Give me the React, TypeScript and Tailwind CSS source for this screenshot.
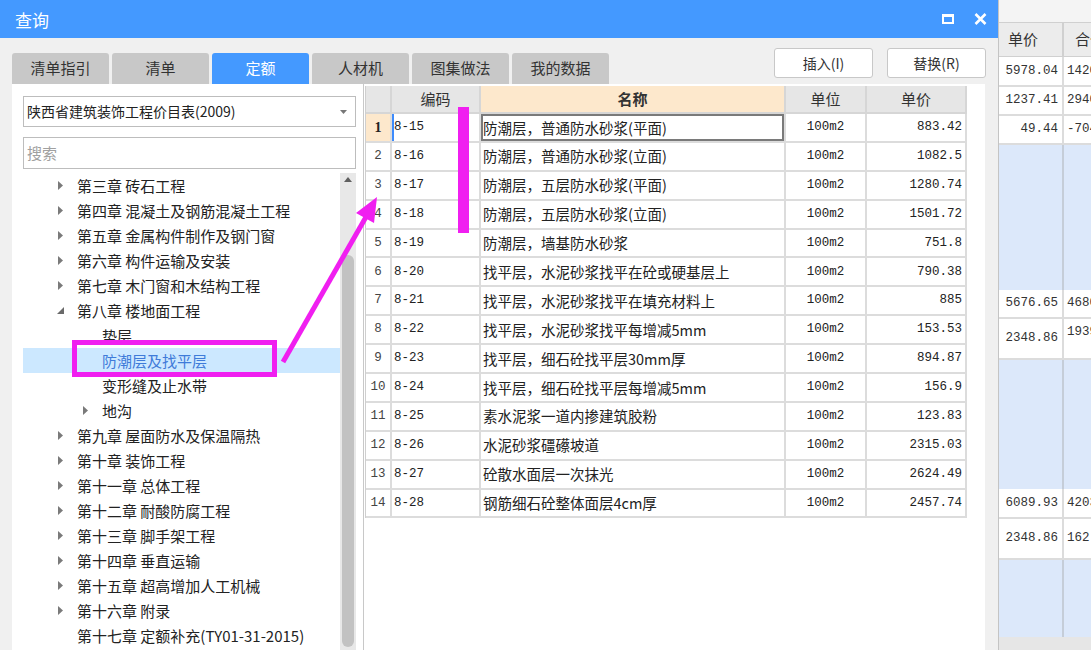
import React from 'react';

const cjk = "font-['Noto_Sans_CJK_SC',sans-serif]";
const mono = "font-['Liberation_Mono',monospace]";

const tabs = ['清单指引', '清单', '定额', '人材机', '图集做法', '我的数据'];

type TreeItem = { t: string; lv: 1 | 2; icon: 'right' | 'open' | 'none'; sel?: boolean };

const tree: TreeItem[] = [
  { t: '第三章 砖石工程', lv: 1, icon: 'right' },
  { t: '第四章 混凝土及钢筋混凝土工程', lv: 1, icon: 'right' },
  { t: '第五章 金属构件制作及钢门窗', lv: 1, icon: 'right' },
  { t: '第六章 构件运输及安装', lv: 1, icon: 'right' },
  { t: '第七章 木门窗和木结构工程', lv: 1, icon: 'right' },
  { t: '第八章 楼地面工程', lv: 1, icon: 'open' },
  { t: '垫层', lv: 2, icon: 'none' },
  { t: '防潮层及找平层', lv: 2, icon: 'none', sel: true },
  { t: '变形缝及止水带', lv: 2, icon: 'none' },
  { t: '地沟', lv: 2, icon: 'right' },
  { t: '第九章 屋面防水及保温隔热', lv: 1, icon: 'right' },
  { t: '第十章 装饰工程', lv: 1, icon: 'right' },
  { t: '第十一章 总体工程', lv: 1, icon: 'right' },
  { t: '第十二章 耐酸防腐工程', lv: 1, icon: 'right' },
  { t: '第十三章 脚手架工程', lv: 1, icon: 'right' },
  { t: '第十四章 垂直运输', lv: 1, icon: 'right' },
  { t: '第十五章 超高增加人工机械', lv: 1, icon: 'right' },
  { t: '第十六章 附录', lv: 1, icon: 'right' },
  { t: '第十七章 定额补充(TY01-31-2015)', lv: 1, icon: 'none' },
];

const rows = [
  ['8-15', '防潮层，普通防水砂浆(平面)', '100m2', '883.42'],
  ['8-16', '防潮层，普通防水砂浆(立面)', '100m2', '1082.5'],
  ['8-17', '防潮层，五层防水砂浆(平面)', '100m2', '1280.74'],
  ['8-18', '防潮层，五层防水砂浆(立面)', '100m2', '1501.72'],
  ['8-19', '防潮层，墙基防水砂浆', '100m2', '751.8'],
  ['8-20', '找平层，水泥砂浆找平在砼或硬基层上', '100m2', '790.38'],
  ['8-21', '找平层，水泥砂浆找平在填充材料上', '100m2', '885'],
  ['8-22', '找平层，水泥砂浆找平每增减5mm', '100m2', '153.53'],
  ['8-23', '找平层，细石砼找平层30mm厚', '100m2', '894.87'],
  ['8-24', '找平层，细石砼找平层每增减5mm', '100m2', '156.9'],
  ['8-25', '素水泥浆一道内掺建筑胶粉', '100m2', '123.83'],
  ['8-26', '水泥砂浆礓礤坡道', '100m2', '2315.03'],
  ['8-27', '砼散水面层一次抹光', '100m2', '2624.49'],
  ['8-28', '钢筋细石砼整体面层4cm厚', '100m2', '2457.74'],
];

// rows of the window behind the dialog
const bgRows: { h: string; a?: string; b?: string; blue?: boolean; top?: boolean }[] = [
  { h: 'h-[30px]', a: '5978.04', b: '1420' },
  { h: 'h-[29px]', a: '1237.41', b: '2940' },
  { h: 'h-[29px]', a: '49.44', b: '-704' },
  { h: 'h-[145px]', blue: true },
  { h: 'h-[29px]', a: '5676.65', b: '4680' },
  { h: 'h-[41px]', a: '2348.86', b: '1939', top: true },
  { h: 'h-[129px]', blue: true },
  { h: 'h-[30px]', a: '6089.93', b: '4203' },
  { h: 'h-[41px]', a: '2348.86', b: '162' },
  { h: 'h-[77px]', blue: true },
];

function Arrow({ icon }: { icon: TreeItem['icon'] }) {
  if (icon === 'right')
    return (
      <svg width="5" height="9" viewBox="0 0 5 9" className="ml-[2px]">
        <polygon points="0,0 5,4.5 0,9" fill="#7a7a7a" />
      </svg>
    );
  if (icon === 'open')
    return (
      <svg width="7" height="7" viewBox="0 0 7 7" className="ml-[1px]">
        <polygon points="7,0 7,7 0,7" fill="#6a6a6a" />
      </svg>
    );
  return null;
}

export default function App() {
  return (
    <div className={`relative w-[1091px] h-[650px] overflow-hidden flex bg-white ${cjk}`}>
      {/* dialog */}
      <div className="w-[998px] shrink-0 h-full flex flex-col bg-[#f0f0f0]">
        <div className="h-[38px] bg-[#4499ff] flex items-center pl-[15px] pr-[11px] shrink-0">
          <span className="text-white text-[17px] leading-none">查询</span>
          <div className="ml-auto flex items-center gap-[20px]">
            <div className="w-[12px] h-[10px] border-2 border-t-[3px] border-white" />
            <svg width="13" height="12" viewBox="0 0 13 12">
              <path d="M1.5 1 L11.5 11 M11.5 1 L1.5 11" stroke="white" strokeWidth="2.6" />
            </svg>
          </div>
        </div>

        <div className="flex items-end pl-[12px] pr-[12px] h-[46px] shrink-0">
          <div className="flex gap-[3px]">
            {tabs.map((t) => (
              <div
                key={t}
                className={`w-[97px] h-[31px] rounded-t-[3px] flex items-center justify-center text-[15px] ${
                  t === '定额' ? 'bg-[#4499ff] text-white' : 'bg-[#c8c8c8] text-[#333]'
                }`}
              >
                {t}
              </div>
            ))}
          </div>
          <div className="ml-auto flex gap-[14px] mb-[6px]">
            <button className="w-[99px] h-[30px] bg-white border border-[#c8c8c8] rounded-[3px] text-[14px] text-[#333]">
              插入(I)
            </button>
            <button className="w-[99px] h-[30px] bg-white border border-[#c8c8c8] rounded-[3px] text-[14px] text-[#333]">
              替换(R)
            </button>
          </div>
        </div>

        <div className="flex-1 flex pl-[12px] pr-[13px] min-h-0">
          {/* left pane */}
          <div className="w-[351px] shrink-0 bg-white pl-[11px] pr-[7px] pt-[12px] flex flex-col">
            <div className="h-[31px] border border-[#bdbdbd] flex items-center pl-[3px] pr-[8px]">
              <span className="text-[14px] text-[#222]">陕西省建筑装饰工程价目表(2009)</span>
              <svg width="7" height="4" viewBox="0 0 7 4" className="ml-auto">
                <polygon points="0,0 7,0 3.5,4" fill="#777" />
              </svg>
            </div>
            <div className="h-[32px] mt-[10px] border border-[#bdbdbd] flex items-center pl-[3px]">
              <span className="text-[15px] text-[#a0a0a0]">搜索</span>
            </div>
            <div className="flex mt-[4px] flex-1 min-h-0">
              <div className="flex-1 flex flex-col">
                {tree.map((it) => (
                  <div
                    key={it.t}
                    className={`h-[25px] shrink-0 flex items-center ${it.sel ? 'bg-[#cce8ff]' : ''}`}
                  >
                    <div className={`${it.lv === 1 ? 'ml-[33px]' : 'ml-[58px]'} w-[21px] flex items-center`}>
                      <Arrow icon={it.icon} />
                    </div>
                    <span className={`text-[15px] leading-none whitespace-nowrap ${it.sel ? 'text-[#3f7bd9]' : 'text-[#222]'}`}>
                      {it.t}
                    </span>
                  </div>
                ))}
              </div>
              <div className="w-[16px] bg-[#e8e8e8] flex flex-col items-center">
                <svg width="8" height="5" viewBox="0 0 8 5" className="mt-[4px]">
                  <polygon points="0,5 8,5 4,0" fill="#606060" />
                </svg>
                <div className="w-[12px] h-[392px] mt-[73px] bg-[#c2c2c2] rounded-full" />
              </div>
            </div>
          </div>

          {/* right pane */}
          <div className="flex-1 bg-white border-l border-[#c8c8c8] pl-[1px] pt-[2px]">
            <div className="w-[602px] border-l border-[#cfcfcf]">
              <div className="grid grid-cols-[26px_89px_305px_81px_100px] h-[28px] text-[15px] text-[#333]">
                <div className="bg-[#e6e6e6] border-r-2 border-b-2 border-[#d6d6d6]" />
                <div className="bg-[#e6e6e6] border-r-2 border-b-2 border-[#d6d6d6] flex items-center justify-center">编码</div>
                <div className="bg-[#fde8cc] border-r-2 border-b-2 border-[#d6d6d6] flex items-center justify-center font-bold">名称</div>
                <div className="bg-[#e6e6e6] border-r-2 border-b-2 border-[#d6d6d6] flex items-center justify-center">单位</div>
                <div className="bg-[#e6e6e6] border-r-2 border-b-2 border-[#d6d6d6] flex items-center justify-center">单价</div>
              </div>
              {rows.map((r, i) => (
                <div key={r[0]} className="grid grid-cols-[26px_89px_305px_81px_100px] h-[28.9px] text-[#222]">
                  <div
                    className={`border-r-2 border-b-2 border-[#dcdcdc] flex items-center justify-center ${
                      i === 0 ? "bg-[#fde8cc] font-bold font-['Liberation_Serif',serif] text-[14px]" : `${mono} text-[12.5px] text-[#444]`
                    }`}
                  >
                    {i + 1}
                  </div>
                  <div
                    className={`border-r-2 border-b-2 border-[#dcdcdc] flex items-center pl-[2px] ${mono} text-[12.5px] ${
                      i === 0 ? 'shadow-[inset_2px_0_0_#3d8bfd]' : ''
                    }`}
                  >
                    {r[0]}
                  </div>
                  <div
                    className={`border-r-2 border-b-2 border-[#dcdcdc] flex items-center pl-[2px] text-[14.5px] whitespace-nowrap ${
                      i === 0 ? 'ring-2 ring-inset ring-[#7a7a7a]' : ''
                    }`}
                  >
                    {r[1]}
                  </div>
                  <div className={`border-r-2 border-b-2 border-[#dcdcdc] flex items-center justify-center ${mono} text-[12.5px]`}>
                    {r[2]}
                  </div>
                  <div className={`border-r-2 border-b-2 border-[#dcdcdc] flex items-center justify-end pr-[3px] ${mono} text-[12.5px]`}>
                    {r[3]}
                  </div>
                </div>
              ))}
            </div>
          </div>
        </div>
      </div>

      {/* window behind the dialog */}
      <div className="flex-1 flex flex-col border-l border-[#c4c4c4] bg-white">
        <div className="h-[22px] bg-[#f4f4f4] shrink-0" />
        <div className="grid grid-cols-[65px_1fr] h-[35px] bg-[#ececec] border-y border-[#d0d0d0] text-[15px] text-[#333] shrink-0">
          <div className="border-r-2 border-[#d0d0d0] flex items-center pl-[9px]">单价</div>
          <div className="flex items-center pl-[11px] whitespace-nowrap">合价</div>
        </div>
        {bgRows.map((r, i) =>
          r.blue ? (
            <div key={i} className={`grid grid-cols-[65px_1fr] ${r.h} bg-[#dce8fa] shrink-0`}>
              <div className="border-r-2 border-[#c5cdd8]" />
              <div />
            </div>
          ) : (
            <div
              key={i}
              className={`grid grid-cols-[65px_1fr] ${r.h} border-b-2 border-[#dcdcdc] ${mono} text-[12.5px] text-[#333] shrink-0`}
            >
              <div className="border-r-2 border-[#dcdcdc] flex items-center justify-end pr-[4px]">{r.a}</div>
              <div className={`flex ${r.top ? 'items-start pt-[4px]' : 'items-center'} pl-[3px] whitespace-nowrap`}>{r.b}</div>
            </div>
          )
        )}
        <div className="flex-1 bg-[#e6e6e6]" />
      </div>

      {/* annotations */}
      <svg className="absolute inset-0 pointer-events-none" width="1091" height="650" viewBox="0 0 1091 650">
        <rect x="74.5" y="342.5" width="200" height="32" fill="none" stroke="#f01ff0" strokeWidth="5" />
        <rect x="458" y="107" width="11" height="126" fill="#f01ff0" />
        <line x1="283" y1="362" x2="366" y2="217" stroke="#f01ff0" strokeWidth="5" />
        <polygon points="377,197 356,213 374,223" fill="#f01ff0" />
      </svg>
    </div>
  );
}
